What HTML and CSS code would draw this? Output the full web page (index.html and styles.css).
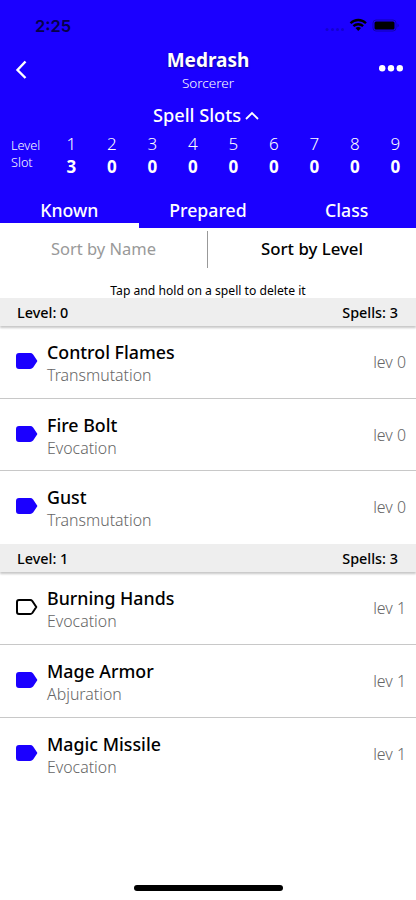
FILE: index.html
```
<!DOCTYPE html>
<html lang="en">
<head>
<meta charset="utf-8">
<title>Medrash</title>
<link rel="stylesheet" href="styles.css">
</head>
<body>
<svg width="0" height="0" class="defs">
  <symbol id="tag" viewBox="0 0 22 16"><path d="M3 1H14.2Q15.5 1 16.3 2L20.3 8L16.3 14Q15.5 15 14.2 15H3Q1 15 1 13V3Q1 1 3 1Z" stroke-width="2" stroke-linejoin="round"/></symbol>
</svg>
<header class="top">
  <div class="status">
    <span class="clock">2:25</span>
    <svg class="signals" width="76" height="14" viewBox="0 0 76 14">
      <g fill="#1500d0"><circle cx="3" cy="11.500" r="1.500"/><circle cx="8.500" cy="11.500" r="1.500"/><circle cx="13.500" cy="11.500" r="1.500"/><circle cx="18.500" cy="11.500" r="1.500"/></g>
      <g fill="none" stroke="#000" stroke-width="2.300"><path d="M26.500 5.200a11 11 0 0 1 15.500 0"/><path d="M29.400 8.200a7 7 0 0 1 9.700 0"/></g>
      <path d="M31.500 10.100a4.200 4.200 0 0 1 5.500 0L34.250 13Z"/>
      <rect x="49" y="2" width="23" height="11" rx="3" fill="none" stroke="#1300b0"/>
      <rect x="50.500" y="3.500" width="20" height="8" rx="1.500"/>
      <path d="M73.500 5.500Q76 7.500 73.500 9.500Z" fill="#1300b0"/>
    </svg>
  </div>
  <div class="nav">
    <svg class="back" width="14" height="20" viewBox="0 0 14 20"><path d="M11.500 1.500L3.500 10L11.500 18" fill="none" stroke="#fff" stroke-width="2.400"/></svg>
    <div class="who"><h1>Medrash</h1><p>Sorcerer</p></div>
    <svg class="more" width="26" height="8" viewBox="0 0 26 8" fill="#fff"><circle cx="4.200" cy="4.300" r="3.200"/><circle cx="13" cy="4.300" r="3.200"/><circle cx="21.800" cy="4.300" r="3.200"/></svg>
  </div>
  <div class="slots-title"><span>Spell Slots</span><svg width="14" height="9" viewBox="0 0 14 9"><path d="M1 8L7 2L13 8" fill="none" stroke="#fff" stroke-width="1.800"/></svg></div>
  <div class="slots">
    <div class="labels"><span>Level</span><span>Slot</span></div>
    <div class="slot"><span>1</span><b>3</b></div>
    <div class="slot"><span>2</span><b>0</b></div>
    <div class="slot"><span>3</span><b>0</b></div>
    <div class="slot"><span>4</span><b>0</b></div>
    <div class="slot"><span>5</span><b>0</b></div>
    <div class="slot"><span>6</span><b>0</b></div>
    <div class="slot"><span>7</span><b>0</b></div>
    <div class="slot"><span>8</span><b>0</b></div>
    <div class="slot"><span>9</span><b>0</b></div>
  </div>
  <nav class="tabs"><a class="active"><span>Known</span></a><a><span>Prepared</span></a><a><span>Class</span></a></nav>
</header>
<main>
  <div class="sort"><span class="off"><i>Sort by Name</i></span><span class="on"><i>Sort by Level</i></span></div>
  <p class="tip"><span>Tap and hold on a spell to delete it</span></p>
  <section>
    <h2><span>Level: 0</span><span>Spells: 3</span></h2>
    <article><svg class="tag"><use href="#tag"/></svg><div><h3>Control Flames</h3><p>Transmutation</p></div><em>lev 0</em></article>
    <article><svg class="tag"><use href="#tag"/></svg><div><h3>Fire Bolt</h3><p>Evocation</p></div><em>lev 0</em></article>
    <article><svg class="tag"><use href="#tag"/></svg><div><h3>Gust</h3><p>Transmutation</p></div><em>lev 0</em></article>
  </section>
  <section>
    <h2><span>Level: 1</span><span>Spells: 3</span></h2>
    <article><svg class="tag open"><use href="#tag"/></svg><div><h3>Burning Hands</h3><p>Evocation</p></div><em>lev 1</em></article>
    <article><svg class="tag"><use href="#tag"/></svg><div><h3>Mage Armor</h3><p>Abjuration</p></div><em>lev 1</em></article>
    <article><svg class="tag"><use href="#tag"/></svg><div><h3>Magic Missile</h3><p>Evocation</p></div><em>lev 1</em></article>
  </section>
</main>
<div class="home"></div>
</body>
</html>
```
FILE: styles.css
```
* { box-sizing: border-box; margin: 0; padding: 0; }
body { width: 416px; height: 900px; overflow: hidden; display: flex; flex-direction: column; background: #fff; color: #000; font-family: "Noto Sans", sans-serif; white-space: nowrap; }
i, em { font-style: normal; }
.defs { position: absolute; }
.top { height: 228px; background: #1b00ff; color: #fff; }
.status { height: 46px; padding: 18px 16px 0 35px; display: flex; justify-content: space-between; color: #000; }
.clock { font: 600 16.5px/17px Inter, sans-serif; color: #06004a; }
.nav { height: 56px; display: flex; justify-content: space-between; padding: 0 12px 0 14px; }
.back { margin-top: 14px; }
.who { text-align: center; margin-left: 10px; }
.who h1 { font-size: 19px; line-height: 29px; font-weight: 700; text-shadow: 0 1px 2px rgba(0,0,0,.5); }
.who p { font-size: 13.5px; line-height: 16px; font-weight: 300; }
.more { margin-top: 18px; }
.slots-title { height: 27px; display: flex; justify-content: center; align-items: center; gap: 4px; font-size: 18.2px; line-height: 26px; font-weight: 500; padding: 0 4px 1px 0; }
.slots { display: flex; height: 65px; padding-top: 3px; }
.labels { width: 51px; padding: 5px 0 0 11px; font-size: 12.7px; font-weight: 300; }
.labels span { display: block; line-height: 17px; }
.slot { width: 40.500px; text-align: center; font-size: 17px; }
.slot span, .slot b { display: block; line-height: 23px; }
.slot span { font-weight: 300; }
.slot b { font-weight: 700; }
.tabs { display: flex; height: 34px; }
.tabs a { flex: 1; text-align: center; font-size: 17.700px; line-height: 32px; font-weight: 500; }
.tabs .active { border-bottom: 5px solid #fff; }
.sort { display: flex; height: 52px; padding-top: 3px; }
.sort span { width: 50%; height: 37px; text-align: center; font-size: 16.800px; line-height: 36px; }
.sort .off { color: #999; border-right: 1px solid #999; font-size: 16.5px; }
.sort .on { font-weight: 500; }
.tip { height: 18px; text-align: center; font-size: 12.150px; line-height: 21px; }
h2 { height: 28.4px; padding: 0 18px 0 17px; display: flex; justify-content: space-between; background: #eee; font-size: 14.4px; line-height: 29px; font-weight: 500; box-shadow: 0 2px 2px rgba(0,0,0,.22); }
article { height: 72.550px; display: flex; padding: 0 10px 0 16px; border-bottom: 1px solid #c8c8c8; }
article:last-child { border-bottom: 0; }
.tag { width: 22px; height: 16px; margin: 27px 9px 0 0; fill: #1b00ff; stroke: #1b00ff; }
.open { fill: none; stroke: #000; }
article div { flex: 1; padding-top: 13px; }
h3 { font-size: 17.800px; line-height: 26px; font-weight: 500; }
article p { font-size: 15.900px; line-height: 20px; font-weight: 300; color: #666; }
em { font-size: 15.900px; line-height: 73px; font-weight: 300; color: #666; }
.home { width: 149px; height: 6px; border-radius: 3px; background: #000; margin: auto auto 9px; }
```
